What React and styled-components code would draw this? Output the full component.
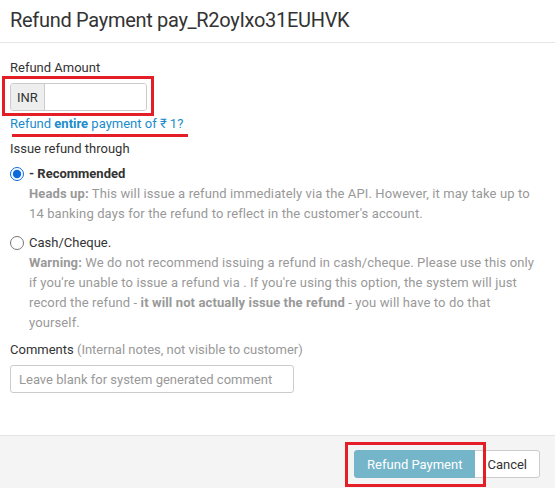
import React from "react";
import styled, { createGlobalStyle } from "styled-components";

const GlobalStyle = createGlobalStyle`
  html, body {
    margin: 0;
    padding: 0;
    background: #fff;
  }
  body {
    font-family: Roboto, "Liberation Sans", Arial, sans-serif;
    font-size: 13px;
    color: #333;
  }
`;

const Modal = styled.div`
  width: 555px;
  height: 488px;
  display: flex;
  flex-direction: column;
  box-sizing: border-box;
`;

const Header = styled.div`
  height: 43px;
  box-sizing: border-box;
  border-bottom: 1px solid #e5e5e5;
  padding: 7px 10px 0;
`;

const Title = styled.h4`
  margin: 0;
  font-size: 20px;
  letter-spacing: -0.3px;
  font-weight: 400;
  line-height: 26px;
  color: #333;
`;

const Body = styled.div`
  flex: 1;
  padding: 16px 10px 0;
`;

const Label = styled.div`
  line-height: 18px;
  color: #333;
  margin-top: ${(p) => p.$top || 0}px;
`;

const Muted = styled.span`
  color: #999;
`;

const Annotated = styled.div`
  position: relative;
  display: inline-block;
`;

const RedBox = styled.div`
  position: absolute;
  left: ${(p) => p.$l}px;
  top: ${(p) => p.$t}px;
  right: ${(p) => p.$r}px;
  bottom: ${(p) => p.$b}px;
  border: 3px solid #e31e26;
  pointer-events: none;
`;

const RedLine = styled.div`
  position: absolute;
  left: 2px;
  right: -5px;
  bottom: -4px;
  height: 3px;
  background: #e31e26;
`;

const InputGroup = styled.div`
  display: flex;
  width: 137px;
  height: 28px;
  margin-top: 6px;
  box-sizing: border-box;
  border: 1px solid #ccc;
  border-radius: 3px;
  overflow: hidden;
`;

const Addon = styled.span`
  display: flex;
  align-items: center;
  padding: 0 6px;
  background: #eee;
  border-right: 1px solid #ccc;
  color: #333;
`;

const AmountInput = styled.input`
  flex: 1;
  min-width: 0;
  border: 0;
  outline: none;
  padding: 0 6px;
  font: inherit;
`;

const LinkRow = styled.div`
  margin-top: 4px;
`;

const Link = styled.a`
  color: #1a8ccc;
  text-decoration: none;
  line-height: 18px;
  display: inline-block;
  b {
    font-weight: 700;
  }
`;

const Option = styled.div`
  margin-top: ${(p) => p.$top}px;
`;

const OptionHead = styled.label`
  display: flex;
  align-items: center;
  line-height: 20px;
  color: #333;
  font-weight: ${(p) => (p.$bold ? 700 : 400)};
`;

const Radio = styled.input`
  width: 14px;
  height: 14px;
  margin: 0 5px 0 0;
  accent-color: #0b6bde;
`;

const Desc = styled.p`
  margin: 0;
  padding-left: 19px;
  box-sizing: border-box;
  max-width: 526px;
  letter-spacing: 0.12px;
  color: #999;
  line-height: 20px;
  b {
    font-weight: 700;
  }
`;

const CommentInput = styled.input`
  display: block;
  width: 284px;
  height: 28px;
  margin-top: 6px;
  box-sizing: border-box;
  border: 1px solid #ccc;
  border-radius: 3px;
  padding: 0 8px;
  font: inherit;
  color: #333;
  &::placeholder {
    color: #999;
  }
`;

const Footer = styled.div`
  height: 53px;
  box-sizing: border-box;
  border-top: 1px solid #e5e5e5;
  background: #f4f4f4;
  display: flex;
  justify-content: flex-end;
  align-items: flex-start;
  padding: 14px 15px 0 0;
`;

const ButtonGroup = styled.div`
  display: flex;
`;

const Button = styled.button`
  height: 28px;
  box-sizing: border-box;
  font: inherit;
  font-size: 13px;
  padding: 0 12px;
  border: 1px solid ${(p) => (p.$primary ? "#74b5ca" : "#ccc")};
  background: ${(p) => (p.$primary ? "#74b5ca" : "#fff")};
  color: ${(p) => (p.$primary ? "#fff" : "#333")};
  border-radius: ${(p) => (p.$primary ? "3px 0 0 3px" : "0 3px 3px 0")};
  margin-left: ${(p) => (p.$primary ? 0 : -1)}px;
`;

export default function App() {
  return (
    <>
      <GlobalStyle />
      <Modal>
        <Header>
          <Title>Refund Payment pay_R2oyIxo31EUHVK</Title>
        </Header>
        <Body>
          <Label>Refund Amount</Label>
          <Annotated>
            <InputGroup>
              <Addon>INR</Addon>
              <AmountInput type="text" />
            </InputGroup>
            <RedBox $l={-8} $t={-1} $r={-7} $b={-5} />
          </Annotated>
          <LinkRow>
            <Annotated>
              <Link href="#">
                Refund <b>entire</b> payment of ₹ 1?
              </Link>
              <RedLine />
            </Annotated>
          </LinkRow>
          <Label $top={7}>Issue refund through</Label>
          <Option $top={6}>
            <OptionHead $bold>
              <Radio type="radio" name="method" defaultChecked />- Recommended
            </OptionHead>
            <Desc>
              <b>Heads up:</b> This will issue a refund immediately via the API. However, it may take up to 14 banking
              days for the refund to reflect in the customer's account.
            </Desc>
          </Option>
          <Option $top={9}>
            <OptionHead>
              <Radio type="radio" name="method" />
              Cash/Cheque.
            </OptionHead>
            <Desc>
              <b>Warning:</b> We do not recommend issuing a refund in cash/cheque. Please use this only if you're
              unable to issue a refund via . If you're using this option, the system will just record the refund -{" "}
              <b>it will not actually issue the refund</b> - you will have to do that yourself.
            </Desc>
          </Option>
          <Label $top={8}>
            Comments <Muted>(Internal notes, not visible to customer)</Muted>
          </Label>
          <CommentInput type="text" placeholder="Leave blank for system generated comment" />
        </Body>
        <Footer>
          <ButtonGroup>
            <Annotated>
              <Button $primary>Refund Payment</Button>
              <RedBox $l={-9} $t={-8} $r={-11} $b={-9} />
            </Annotated>
            <Button>Cancel</Button>
          </ButtonGroup>
        </Footer>
      </Modal>
    </>
  );
}
